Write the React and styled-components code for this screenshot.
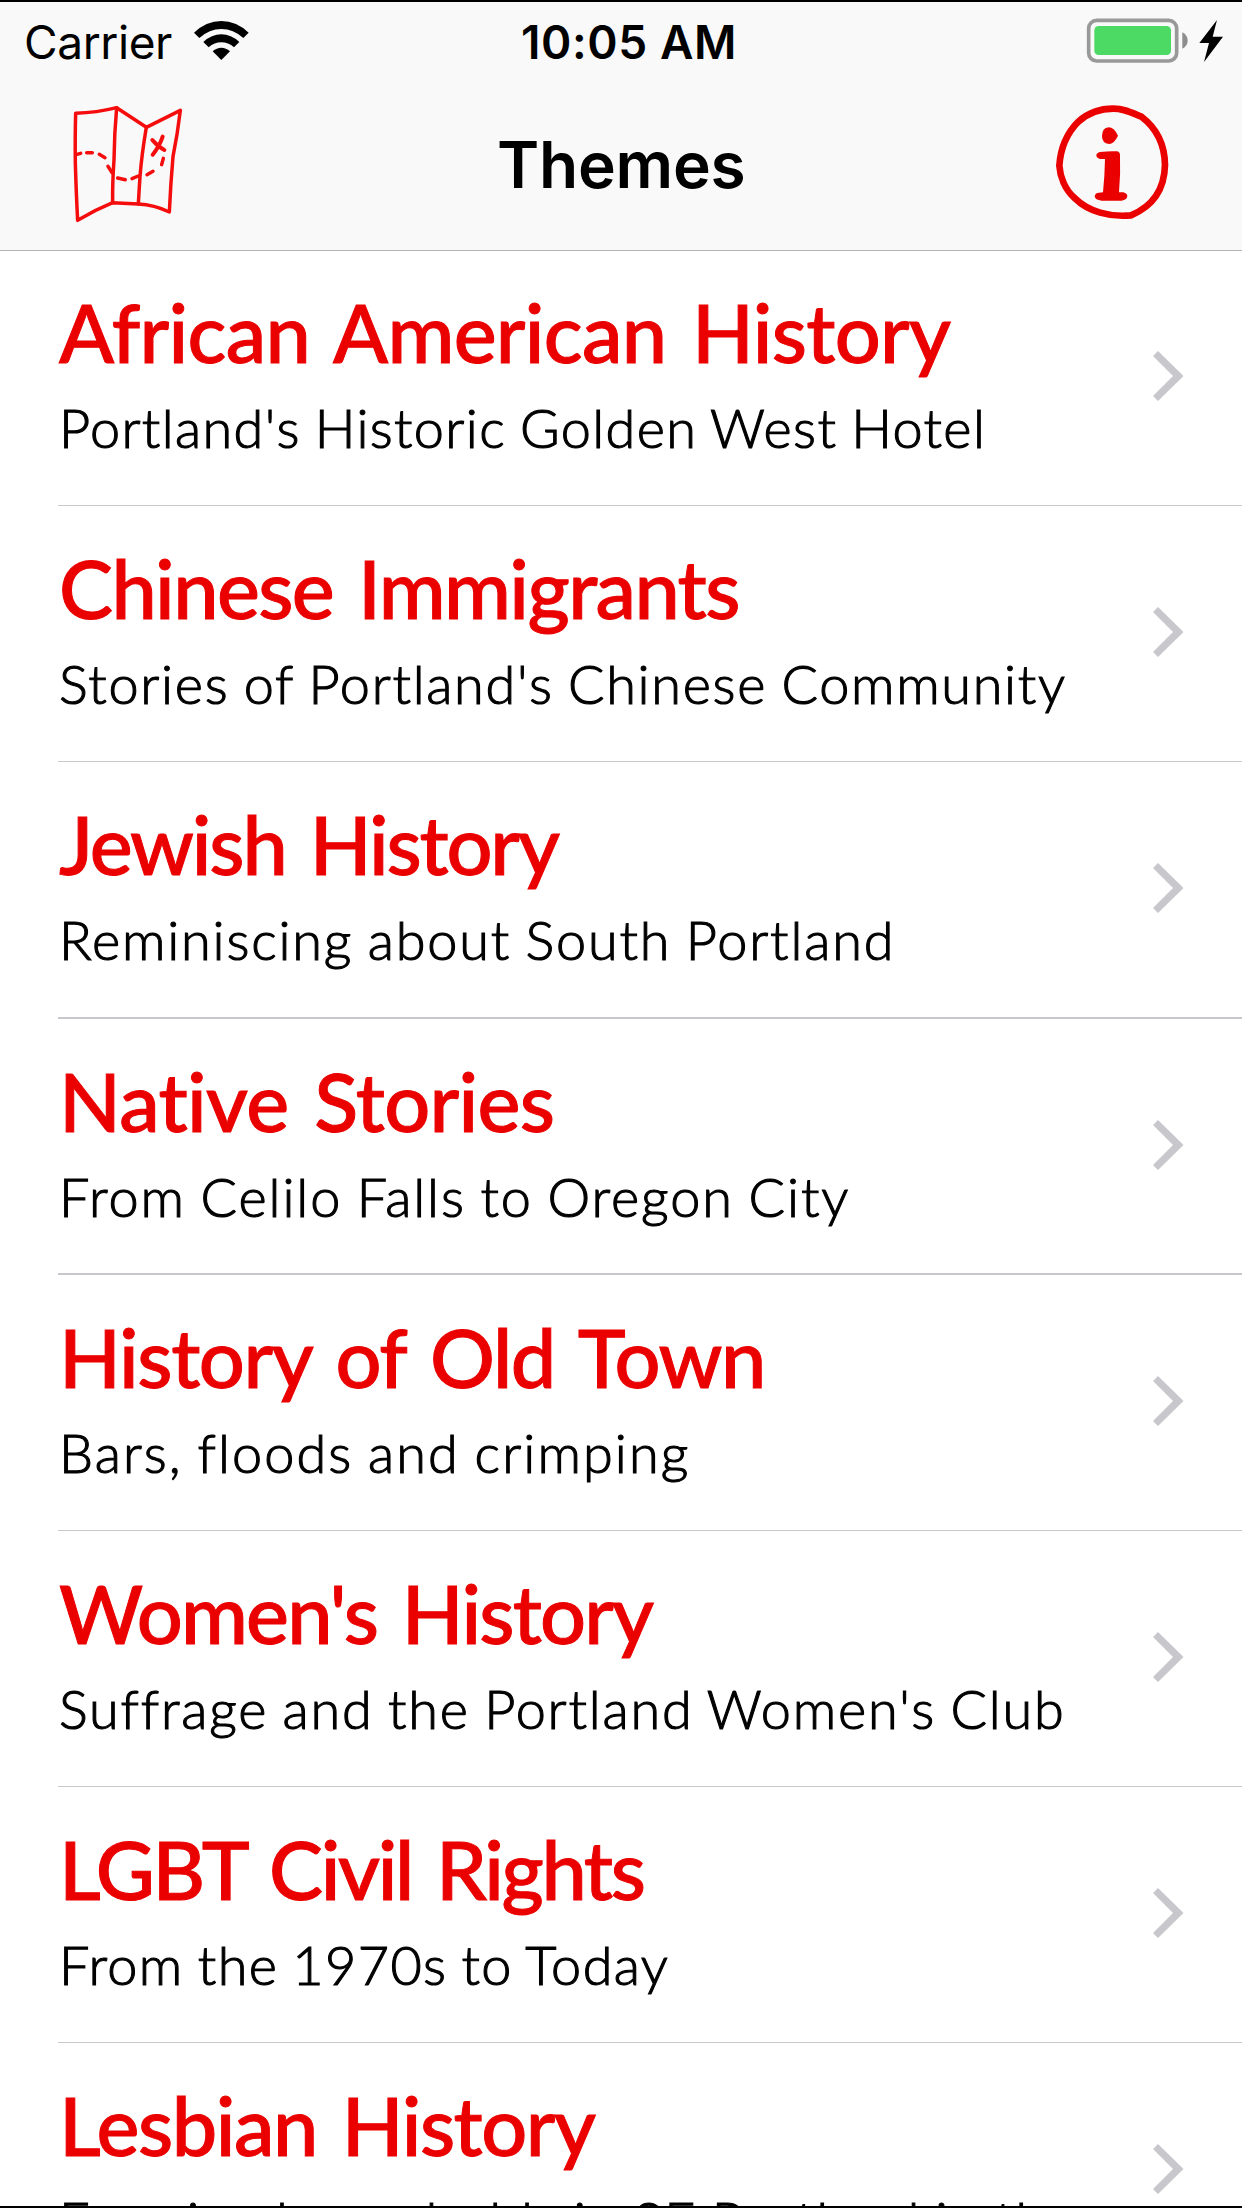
import React from "react";
import styled, { createGlobalStyle } from "styled-components";

const GlobalStyle = createGlobalStyle`
  html, body { margin: 0; padding: 0; background: #fff; }
  body { overflow: hidden; }
`;

const Screen = styled.div`
  box-sizing: border-box;
  width: 1242px;
  height: 2208px;
  display: flex;
  flex-direction: column;
  overflow: hidden;
  background: #fff;
  border-top: 2px solid #000;
  border-bottom: 2px solid #000;
  font-family: Lato, "Liberation Sans", sans-serif;
`;

const Header = styled.header`
  flex: none;
  height: 248px;
  background: #f9f9f9;
  box-shadow: 0 1px 0 #b2b2b2;
  font-family: Inter, "Liberation Sans", sans-serif;
  color: #000;
  z-index: 1;
`;

const StatusBar = styled.div`
  display: grid;
  grid-template-columns: 521px 1fr auto;
  height: 80px;
`;

const Network = styled.div`
  display: flex;
  align-items: flex-start;
  padding: 12px 0 0 24px;
`;

const Carrier = styled.span`
  width: 169px;
  font-size: 46px;
  line-height: 56px;
  letter-spacing: -0.4px;
`;

const Clock = styled.span`
  padding-top: 12px;
  font-size: 46px;
  line-height: 56px;
  font-weight: 600;
  letter-spacing: 0.6px;
`;

const WifiIcon = styled.svg`
  width: 56px;
  height: 41px;
  margin-top: 6px;
`;

const BatteryIcon = styled.svg`
  width: 138px;
  height: 45px;
  margin: 16px 18px 0 0;
`;

const NavBar = styled.div`
  display: grid;
  grid-template-columns: 425px 1fr auto;
  padding: 21px 71px 0 72px;
`;

const MapIcon = styled.svg`
  width: 111px;
  height: 120px;
  margin-top: 1px;
`;

const InfoIcon = styled.svg`
  width: 117px;
  height: 118px;
`;

const Heading = styled.h1`
  margin: 23px 0 0;
  font-size: 64px;
  line-height: 78px;
  font-weight: 600;
  letter-spacing: -0.25px;
`;

const List = styled.ul`
  flex: 1;
  min-height: 0;
  margin: 0;
  padding: 0 0 0 58px;
  list-style: none;
`;

const Row = styled.li`
  box-sizing: border-box;
  display: flex;
  justify-content: space-between;
  height: ${(p) => (p.$rule === "thick" ? 257 : 256)}px;
  padding: 33px 58px 0 1px;
  border-bottom: ${(p) => (p.$rule === "thin" ? 1 : 2)}px solid #c8c7cc;
`;

const Labels = styled.div`
  white-space: nowrap;
`;

const Title = styled.h2`
  margin: 0;
  font-size: 81px;
  line-height: 98px;
  font-weight: 500;
  letter-spacing: ${(p) => p.$tracking}px;
  word-spacing: 6px;
  color: #eb0000;
  -webkit-text-stroke: 1px #eb0000;
`;

const Subtitle = styled.p`
  margin: 14px 0 0;
  font-size: 54px;
  line-height: 65px;
  font-weight: 300;
  letter-spacing: ${(p) => p.$tracking}px;
  word-spacing: -2px;
  color: #000;
  -webkit-text-stroke: 1.1px #000;
`;

const Chevron = styled.svg`
  flex: none;
  width: 31px;
  height: 50px;
  margin-top: 68px;
`;

const themes = [
  { title: "African American History", tt: -0.7, sub: "Portland's Historic Golden West Hotel", st: 1.36, rule: "thin" },
  { title: "Chinese Immigrants", tt: -1.61, sub: "Stories of Portland's Chinese Community", st: 1.7, rule: "thin" },
  { title: "Jewish History", tt: -2.18, sub: "Reminiscing about South Portland", st: 1.83, rule: "thick" },
  { title: "Native Stories", tt: -0.69, sub: "From Celilo Falls to Oregon City", st: 1.93, rule: "medium" },
  { title: "History of Old Town", tt: -1.39, sub: "Bars, floods and crimping", st: 2.08, rule: "thin" },
  { title: "Women's History", tt: -1.83, sub: "Suffrage and the Portland Women's Club", st: 1.8, rule: "thin" },
  { title: "LGBT Civil Rights", tt: -2.37, sub: "From the 1970s to Today", st: 1.38, rule: "thin" },
  { title: "Lesbian History", tt: -1.48, sub: "Forming households in SE Portland in the", st: 1.8, rule: "thin" },
];

function Wifi() {
  return (
    <WifiIcon viewBox="579 60 168 123">
      <path d="M582 98 Q619 63 664 63 Q709 63 746 98 L730 114 Q700 87 664 87 Q628 87 598 114Z" />
      <path d="M610 126 Q635 103 664 103 Q693 103 718 126 L702 142 Q685 127 664 127 Q643 127 626 142Z" />
      <path d="M638 154 Q650 143 664 143 Q678 143 690 154 L664 180Z" />
    </WifiIcon>
  );
}

function Battery() {
  return (
    <BatteryIcon viewBox="168 54 414 135">
      <rect x="176" y="61" width="264" height="122" rx="24" fill="none" stroke="#999" strokeWidth="11" />
      <rect x="193" y="78" width="230" height="87" rx="13" fill="#4cd964" />
      <path d="M457 97 Q473 105 473 122 Q473 138 457 146Z" fill="#8e8e8e" />
      <path d="M561 60 L508 129 L537 129 L522 186 L579 110 L548 110Z" />
    </BatteryIcon>
  );
}

function FoldedMap() {
  return (
    <MapIcon viewBox="216 312 333 360" fill="none" stroke="#f50d0d" strokeWidth="10.5" strokeLinecap="round" strokeLinejoin="round">
      <path d="M227 340 Q290 338 350 323 L439 382 L541 331 Q533 400 519 470 Q512 550 508 636 Q462 614 415 612 L338 608 Q284 630 233 661 Q229 590 226 490 Q225 410 227 340Z" />
      <path d="M350 323 Q343 400 342 480 Q337 550 338 608 M439 382 Q425 465 420 530 Q417 575 415 612" />
      <path d="M228 464 L242 460 M260 458 L277 458 M298 463 L315 473 M324 499 L336 518 M353 534 L376 539 M396 536 L415 528 M441 524 L459 514 M485 494 L490 475" />
      <path d="M457 420 Q474 440 493 450 M488 410 Q478 440 458 464" strokeWidth="12" />
    </MapIcon>
  );
}

function Info() {
  return (
    <InfoIcon viewBox="72 309 351 354" fill="#eb0000">
      <path
        d="M250 326 C285 326 305 338 334 350 C380 385 404 430 405 495 C403 575 365 620 303 646 C240 652 175 635 135 595 C105 570 90 530 88 497 C92 440 115 395 145 365 C175 338 210 326 250 326Z"
        fill="none"
        stroke="#eb0000"
        strokeWidth="20"
      />
      <path d="M236 382 Q252 382 264 407 Q252 432 237 432 Q216 430 216 408 Q216 384 236 382Z" />
      <path d="M210 456 Q238 453 260 454 Q270 455 270 466 Q272 520 267 577 L280 577 Q292 580 292 589 Q290 600 275 602 L215 602 Q195 600 194 589 Q195 579 207 578 L219 577 Q224 530 225 477 L210 477 Q199 474 199 466 Q200 458 210 456Z" />
    </InfoIcon>
  );
}

export default function App() {
  return (
    <>
      <GlobalStyle />
      <Screen>
        <Header>
          <StatusBar>
            <Network>
              <Carrier>Carrier</Carrier>
              <Wifi />
            </Network>
            <Clock>10:05 AM</Clock>
            <Battery />
          </StatusBar>
          <NavBar>
            <FoldedMap />
            <Heading>Themes</Heading>
            <Info />
          </NavBar>
        </Header>
        <List>
          {themes.map((t) => (
            <Row key={t.title} $rule={t.rule}>
              <Labels>
                <Title $tracking={t.tt}>{t.title}</Title>
                <Subtitle $tracking={t.st}>{t.sub}</Subtitle>
              </Labels>
              <Chevron viewBox="0 0 31 50">
                <path d="M5 0 L30.5 25 L5 50 L0 45 L20 25 L0 5Z" fill="#c7c7cc" />
              </Chevron>
            </Row>
          ))}
        </List>
      </Screen>
    </>
  );
}
